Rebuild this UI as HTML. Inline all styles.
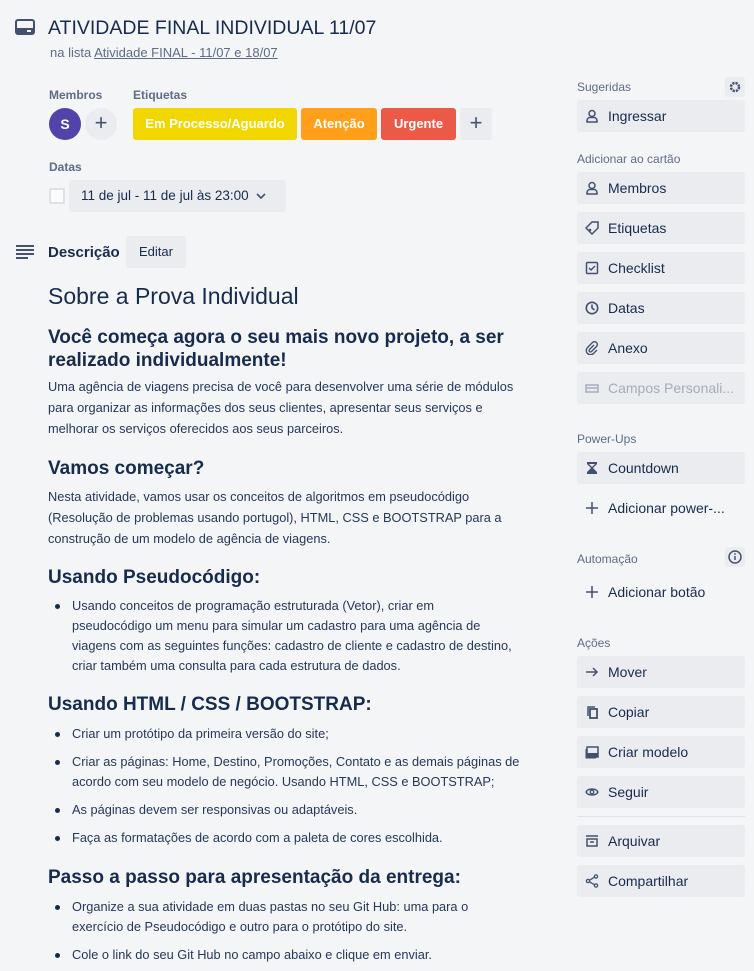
<!DOCTYPE html>
<html><head><meta charset="utf-8"><style>
*{margin:0;padding:0;box-sizing:border-box}
body{width:754px;height:971px;background:#f4f5f7;font-family:"Liberation Sans",sans-serif;color:#172b4d;position:relative;overflow:hidden}
.a{position:absolute;white-space:nowrap}
.lbl{font-size:12px;color:#5e6c84;font-weight:bold;line-height:14px}
.p{font-size:12.8px;line-height:20px;color:#253858}
.h2{font-size:19px;line-height:24px;font-weight:bold;color:#172b4d}
.bul{position:absolute;width:5px;height:5px;border-radius:50%;background:#172b4d}
.btn{position:absolute;left:577px;width:168px;height:32px;background:#eaecf0;border-radius:3px;font-size:14px;line-height:32px;padding-left:31px;color:#172b4d}
.btn.nb{background:none}
.btn svg{position:absolute;left:8px;top:9px}
.sh{position:absolute;left:577px;font-size:12px;color:#5e6c84;line-height:14px}
</style></head><body>

<svg class="a" style="left:15px;top:19px" width="20" height="16" viewBox="0 0 20 16"><rect x="1" y="1" width="18" height="14" rx="2" fill="none" stroke="#42526e" stroke-width="2"/><rect x="1" y="9" width="18" height="6" fill="#42526e"/><rect x="12" y="11" width="4" height="2" fill="#fff"/></svg>
<div class="a" style="left:48px;top:16px;font-size:19.5px;line-height:24px;color:#172b4d">ATIVIDADE FINAL INDIVIDUAL 11/07</div>
<div class="a" style="left:50px;top:45px;font-size:13px;line-height:16px;color:#5e6c84">na lista <span style="text-decoration:underline">Atividade FINAL - 11/07 e 18/07</span></div>

<div class="a lbl" style="left:49px;top:88px">Membros</div>
<div class="a lbl" style="left:133px;top:88px">Etiquetas</div>
<div class="a" style="left:49px;top:108px;width:32px;height:32px;border-radius:50%;background:#5243aa;color:#fff;font-size:14px;font-weight:bold;text-align:center;line-height:32px">S</div>
<div class="a" style="left:85px;top:108px;width:32px;height:32px;border-radius:50%;background:#ebecf0;color:#42526e;font-size:22px;text-align:center;line-height:30px">+</div>
<div class="a" style="left:133px;top:108px;width:164px;height:32px;border-radius:3px;background:#f2d600;color:#fff;font-size:13px;font-weight:bold;text-align:center;line-height:32px">Em Processo/Aguardo</div>
<div class="a" style="left:301px;top:108px;width:76px;height:32px;border-radius:3px;background:#ff9f1a;color:#fff;font-size:13px;font-weight:bold;text-align:center;line-height:32px">Atenção</div>
<div class="a" style="left:381px;top:108px;width:75px;height:32px;border-radius:3px;background:#eb5a46;color:#fff;font-size:13px;font-weight:bold;text-align:center;line-height:32px">Urgente</div>
<div class="a" style="left:460px;top:108px;width:32px;height:32px;border-radius:3px;background:#ebecf0;color:#42526e;font-size:22px;text-align:center;line-height:30px">+</div>

<div class="a lbl" style="left:49px;top:160px">Datas</div>
<div class="a" style="left:49px;top:188px;width:16px;height:16px;border-radius:2px;background:#fafbfc;border:2px solid #dfe1e6"></div>
<div class="a" style="left:69px;top:180px;width:217px;height:32px;border-radius:3px;background:#ebecf0;font-size:13.5px;line-height:32px;padding-left:12px;color:#172b4d">11 de jul - 11 de jul às 23:00 <svg width="12" height="8" viewBox="0 0 12 8" style="margin-left:3px"><path d="M2 2l4 4 4-4" fill="none" stroke="#42526e" stroke-width="1.6"/></svg></div>

<svg class="a" style="left:15px;top:244px" width="20" height="16" viewBox="0 0 20 16"><g stroke="#42526e" stroke-width="2"><path d="M1 2h18M1 6h18M1 10h18M1 14h12"/></g></svg>
<div class="a" style="left:48px;top:243px;font-size:15px;line-height:20px;font-weight:bold">Descrição</div>
<div class="a" style="left:126px;top:236px;width:60px;height:32px;border-radius:3px;background:#ebecf0;font-size:13px;line-height:32px;text-align:center">Editar</div>

<div class="a" style="left:48px;top:281px;font-size:23px;line-height:30px">Sobre a Prova Individual</div>
<div class="a h2" style="left:48px;top:326px">Você começa agora o seu mais novo projeto, a ser</div>
<div class="a h2" style="left:48px;top:349px">realizado individualmente!</div>
<div class="a p" style="left:48px;top:377px">Uma agência de viagens precisa de você para desenvolver uma série de módulos</div>
<div class="a p" style="left:48px;top:398px">para organizar as informações dos seus clientes, apresentar seus serviços e</div>
<div class="a p" style="left:48px;top:419px">melhorar os serviços oferecidos aos seus parceiros.</div>

<div class="a h2" style="left:48px;top:457px">Vamos começar?</div>
<div class="a p" style="left:48px;top:487px">Nesta atividade, vamos usar os conceitos de algoritmos em pseudocódigo</div>
<div class="a p" style="left:48px;top:508px">(Resolução de problemas usando portugol), HTML, CSS e BOOTSTRAP para a</div>
<div class="a p" style="left:48px;top:529px">construção de um modelo de agência de viagens.</div>

<div class="a h2" style="left:48px;top:566px">Usando Pseudocódigo:</div>
<div class="bul" style="left:55px;top:604px"></div>
<div class="a p" style="left:72px;top:596px">Usando conceitos de programação estruturada (Vetor), criar em</div>
<div class="a p" style="left:72px;top:616px">pseudocódigo um menu para simular um cadastro para uma agência de</div>
<div class="a p" style="left:72px;top:636px">viagens com as seguintes funções: cadastro de cliente e cadastro de destino,</div>
<div class="a p" style="left:72px;top:656px">criar também uma consulta para cada estrutura de dados.</div>

<div class="a h2" style="left:48px;top:693px">Usando HTML / CSS / BOOTSTRAP:</div>
<div class="bul" style="left:55px;top:732px"></div>
<div class="a p" style="left:72px;top:724px">Criar um protótipo da primeira versão do site;</div>
<div class="bul" style="left:55px;top:760px"></div>
<div class="a p" style="left:72px;top:752px">Criar as páginas: Home, Destino, Promoções, Contato e as demais páginas de</div>
<div class="a p" style="left:72px;top:772px">acordo com seu modelo de negócio. Usando HTML, CSS e BOOTSTRAP;</div>
<div class="bul" style="left:55px;top:808px"></div>
<div class="a p" style="left:72px;top:800px">As páginas devem ser responsivas ou adaptáveis.</div>
<div class="bul" style="left:55px;top:836px"></div>
<div class="a p" style="left:72px;top:828px">Faça as formatações de acordo com a paleta de cores escolhida.</div>

<div class="a h2" style="left:48px;top:866px">Passo a passo para apresentação da entrega:</div>
<div class="bul" style="left:55px;top:905px"></div>
<div class="a p" style="left:72px;top:897px">Organize a sua atividade em duas pastas no seu Git Hub: uma para o</div>
<div class="a p" style="left:72px;top:917px">exercício de Pseudocódigo e outro para o protótipo do site.</div>
<div class="bul" style="left:55px;top:953px"></div>
<div class="a p" style="left:72px;top:945px">Cole o link do seu Git Hub no campo abaixo e clique em enviar.</div>

<!-- sidebar -->
<div class="sh" style="top:80px">Sugeridas</div>
<div class="a" style="left:725px;top:77px;width:20px;height:20px;background:#ebecf0;border-radius:3px"><svg width="20" height="20" viewBox="0 0 20 20"><circle cx="10" cy="10" r="4" fill="none" stroke="#42526e" stroke-width="2.5" stroke-dasharray="2.2 1"/><circle cx="10" cy="10" r="1.8" fill="#ebecf0"/></svg></div>
<div class="btn" style="top:100px"><svg width="14" height="14" viewBox="0 0 14 14"><circle cx="7" cy="4.5" r="3" fill="none" stroke="#42526e" stroke-width="1.5"/><path d="M2 13v-1.5a3 3 0 013-3h4a3 3 0 013 3V13z" fill="none" stroke="#42526e" stroke-width="1.5"/></svg>Ingressar</div>

<div class="sh" style="top:152px">Adicionar ao cartão</div>
<div class="btn" style="top:172px"><svg width="14" height="14" viewBox="0 0 14 14"><circle cx="7" cy="4.5" r="3" fill="none" stroke="#42526e" stroke-width="1.5"/><path d="M2 13v-1.5a3 3 0 013-3h4a3 3 0 013 3V13z" fill="none" stroke="#42526e" stroke-width="1.5"/></svg>Membros</div>
<div class="btn" style="top:212px"><svg width="14" height="14" viewBox="0 0 14 14"><path d="M1 7l6-6h6v6l-6 6z" fill="none" stroke="#42526e" stroke-width="1.5"/><circle cx="5" cy="9" r="1.3" fill="#42526e"/></svg>Etiquetas</div>
<div class="btn" style="top:252px"><svg width="14" height="14" viewBox="0 0 14 14"><rect x="1.5" y="1.5" width="11" height="11" rx="1" fill="none" stroke="#42526e" stroke-width="1.5"/><path d="M4 7l2 2 4-4" fill="none" stroke="#42526e" stroke-width="1.5"/></svg>Checklist</div>
<div class="btn" style="top:292px"><svg width="14" height="14" viewBox="0 0 14 14"><circle cx="7" cy="7" r="5.7" fill="none" stroke="#42526e" stroke-width="1.6"/><path d="M7 3.5V7l2.5 2" fill="none" stroke="#42526e" stroke-width="1.6"/></svg>Datas</div>
<div class="btn" style="top:332px"><svg width="14" height="14" viewBox="0 0 14 14"><path d="M9 4L4.5 8.5a1.4 1.4 0 002 2L11.5 5.5a2.8 2.8 0 00-4-4L2.5 6.5a4.2 4.2 0 006 6L12 9" fill="none" stroke="#42526e" stroke-width="1.4"/></svg>Anexo</div>
<div class="btn" style="top:372px;color:#a5adba"><svg width="14" height="14" viewBox="0 0 14 14"><rect x="1" y="4" width="12" height="7" fill="none" stroke="#a5adba" stroke-width="1.5"/><path d="M1 7h12" stroke="#a5adba" stroke-width="1.5"/></svg>Campos Personali...</div>

<div class="sh" style="top:432px">Power-Ups</div>
<div class="btn" style="top:452px"><svg width="14" height="14" viewBox="0 0 14 14"><path d="M2 1h10v2L8 7l4 4v2H2v-2l4-4-4-4z" fill="#42526e"/><path d="M4 3h6L7 6z" fill="#eaecf0"/></svg>Countdown</div>
<div class="btn nb" style="top:492px"><svg width="14" height="14" viewBox="0 0 14 14"><path d="M7 1v12M1 7h12" stroke="#42526e" stroke-width="1.5"/></svg>Adicionar power-...</div>

<div class="sh" style="top:552px">Automação</div>
<div class="a" style="left:725px;top:547px;width:20px;height:20px;background:#ebecf0;border-radius:3px"><svg width="20" height="20" viewBox="0 0 20 20"><circle cx="10" cy="10" r="6" fill="none" stroke="#42526e" stroke-width="1.5"/><path d="M10 9v4" stroke="#42526e" stroke-width="1.5"/><circle cx="10" cy="7" r="0.9" fill="#42526e"/></svg></div>
<div class="btn nb" style="top:576px"><svg width="14" height="14" viewBox="0 0 14 14"><path d="M7 1v12M1 7h12" stroke="#42526e" stroke-width="1.5"/></svg>Adicionar botão</div>

<div class="sh" style="top:636px">Ações</div>
<div class="btn" style="top:656px"><svg width="14" height="14" viewBox="0 0 14 14"><path d="M1 7h11M8 3l4 4-4 4" fill="none" stroke="#42526e" stroke-width="1.5"/></svg>Mover</div>
<div class="btn" style="top:696px"><svg width="14" height="14" viewBox="0 0 14 14"><path d="M3 11V2h7" fill="none" stroke="#42526e" stroke-width="1.5"/><rect x="5" y="4" width="7" height="9" fill="none" stroke="#42526e" stroke-width="1.8"/></svg>Copiar</div>
<div class="btn" style="top:736px"><svg width="14" height="14" viewBox="0 0 14 14"><rect x="2" y="2" width="11" height="10" fill="none" stroke="#42526e" stroke-width="1.5"/><rect x="2" y="8" width="11" height="4" fill="#42526e"/><path d="M1 4v9h10" fill="none" stroke="#42526e" stroke-width="1"/></svg>Criar modelo</div>
<div class="btn" style="top:776px"><svg width="14" height="14" viewBox="0 0 14 14"><path d="M1 7c2-4 10-4 12 0-2 4-10 4-12 0z" fill="none" stroke="#42526e" stroke-width="1.4"/><circle cx="7" cy="7" r="1.8" fill="none" stroke="#42526e" stroke-width="1.4"/></svg>Seguir</div>
<div class="a" style="left:577px;top:816px;width:168px;height:1px;background:#dfe1e6"></div>
<div class="btn" style="top:825px"><svg width="14" height="14" viewBox="0 0 14 14"><path d="M1 2h12M2 5h10v7H2z" fill="none" stroke="#42526e" stroke-width="1.5"/><path d="M5 8h4" stroke="#42526e" stroke-width="1.5"/></svg>Arquivar</div>
<div class="btn" style="top:865px"><svg width="14" height="14" viewBox="0 0 14 14"><circle cx="3" cy="7" r="1.6" fill="none" stroke="#42526e" stroke-width="1.3"/><circle cx="11" cy="2.5" r="1.6" fill="none" stroke="#42526e" stroke-width="1.3"/><circle cx="11" cy="11.5" r="1.6" fill="none" stroke="#42526e" stroke-width="1.3"/><path d="M4.5 6.2l5-3M4.5 7.8l5 3" stroke="#42526e" stroke-width="1.3"/></svg>Compartilhar</div>

</body></html>
